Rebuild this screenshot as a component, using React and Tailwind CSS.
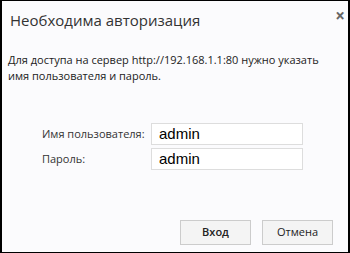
export default function App() {
  return (
    <div className="w-[350px] h-[253px] bg-black pl-[2px] pt-[1px] pr-[2px] pb-[1px]">
      <div className="relative w-full h-full bg-[#fbfbfd] flex flex-col" style={{ fontFamily: '"Open Sans", "Noto Sans", sans-serif' }}>
        <span className="absolute right-[3px] top-[6px] text-[17px] leading-none text-[#666] font-bold">×</span>
        <h1 className="ml-[8px] mt-[9px] text-[15px] leading-[20px] text-[#333]">Необходима авторизация</h1>
        <p className="ml-[6px] mt-[22px] mr-[10px] text-[11px] leading-[16px] text-[#222]">
          Для доступа на сервер http://192.168.1.1:80 нужно указать имя пользователя и пароль.
        </p>
        <div className="ml-[40px] mt-[39px] flex flex-col gap-[3px]">
          <div className="flex items-center">
            <span className="w-[109px] text-[11px] text-[#333]">Имя пользователя:</span>
            <div className="w-[152px] h-[22px] border border-[#ddd] bg-white px-[7px] flex items-center text-[15px] text-black" style={{ fontFamily: '"Liberation Sans", Arial, sans-serif' }}>admin</div>
          </div>
          <div className="flex items-center">
            <span className="w-[109px] text-[11px] text-[#333]">Пароль:</span>
            <div className="w-[152px] h-[22px] border border-[#ddd] bg-white px-[7px] flex items-center text-[15px] text-black" style={{ fontFamily: '"Liberation Sans", Arial, sans-serif' }}>admin</div>
          </div>
        </div>
        <div className="mt-auto mb-[7px] mr-[15px] flex justify-end gap-[11px]">
          <button className="w-[71px] h-[25px] border border-[#ccc] bg-[#f4f4f4] text-[11px] font-semibold text-[#222]">Вход</button>
          <button className="w-[71px] h-[25px] border border-[#ccc] bg-[#f4f4f4] text-[11px] text-[#222]">Отмена</button>
        </div>
      </div>
    </div>
  );
}
